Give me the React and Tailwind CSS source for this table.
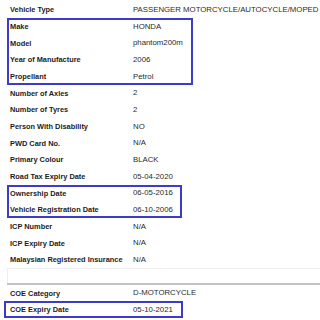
import React from "react";

const rows1 = [["Vehicle Type", "PASSENGER MOTORCYCLE/AUTOCYCLE/MOPED"]];
const box1 = [
  ["Make", "HONDA"],
  ["Model", "phantom200m"],
  ["Year of Manufacture", "2006"],
  ["Propellant", "Petrol"],
];
const rows2 = [
  ["Number of Axles", "2"],
  ["Number of Tyres", "2"],
  ["Person With Disability", "NO"],
  ["PWD Card No.", "N/A"],
  ["Primary Colour", "BLACK"],
  ["Road Tax Expiry Date", "05-04-2020"],
];
const box2 = [
  ["Ownership Date", "06-05-2016"],
  ["Vehicle Registration Date", "06-10-2006"],
];
const rows3 = [
  ["ICP Number", "N/A"],
  ["ICP Expiry Date", "N/A"],
  ["Malaysian Registered Insurance", "N/A"],
];

function Row({ label, value }) {
  return (
    <div className="flex items-center h-[16.67px]">
      <div className="w-[133px] pl-[10px] shrink-0 font-bold text-[7.4px] text-[#1c1c1c] whitespace-nowrap">
        {label}
      </div>
      <div className="text-[7.8px] text-[#2a2a2a] whitespace-nowrap">{value}</div>
    </div>
  );
}

function Boxed({ items, left, width }) {
  return (
    <div className="relative">
      {items.map(([l, v]) => (
        <Row key={l} label={l} value={v} />
      ))}
      <div
        className="absolute top-0 bottom-0 border-2 border-[#3c3cc8] pointer-events-none"
        style={{ left, width }}
      />
    </div>
  );
}

export default function App() {
  return (
    <div
      className="w-[320px] h-[320px] bg-white overflow-hidden pt-[1.67px]"
      style={{ fontFamily: '"Liberation Sans", Arial, sans-serif' }}
    >
      {rows1.map(([l, v]) => (
        <Row key={l} label={l} value={v} />
      ))}
      <Boxed items={box1} left={7} width={186} />
      {rows2.map(([l, v]) => (
        <Row key={l} label={l} value={v} />
      ))}
      <Boxed items={box2} left={7} width={175} />
      {rows3.map(([l, v]) => (
        <Row key={l} label={l} value={v} />
      ))}
      <div className="h-[16.67px] ml-[7px] flex flex-col">
        <div className="flex-1 border-t border-l border-[#eeeeee]" />
        <div className="h-[2px] bg-[#c4c4c4]" />
      </div>
      <Row label="COE Category" value="D-MOTORCYCLE" />
      <Boxed items={[["COE Expiry Date", "05-10-2021"]]} left={4} width={179} />
    </div>
  );
}
